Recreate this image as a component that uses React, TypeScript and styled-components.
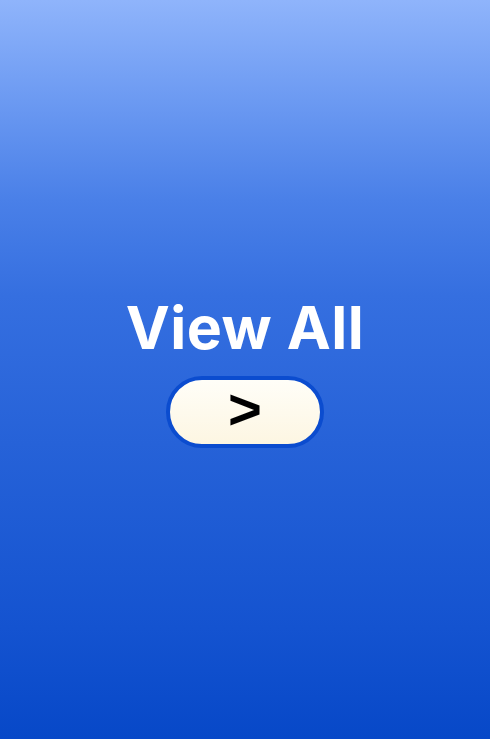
import styled, { createGlobalStyle } from 'styled-components';

const GlobalStyle = createGlobalStyle`
	html, body {
		margin: 0;
		padding: 0;
	}

	body {
		font-family: Inter, "Liberation Sans", sans-serif;
	}
`;

const App = () => {
	return (
		<>
			<GlobalStyle />
			<Page>
				<Title>View All</Title>
				<ArrowButton type="button" aria-label="View all">
					&gt;
				</ArrowButton>
			</Page>
		</>
	);
};

export default App;

const Page = styled.main`
	display: flex;
	flex-direction: column;
	align-items: center;
	justify-content: center;
	width: 100%;
	height: 739px;
	padding-top: 6px;
	box-sizing: border-box;
	background: linear-gradient(
		180deg,
		#8fb4fb 0%,
		#6c9af2 13.5%,
		#4a80e8 27%,
		#356fe0 40%,
		#2662d8 60%,
		#1453d0 85%,
		#0748c8 100%
	);
`;

const Title = styled.h1`
	margin: 0;
	font-family: Inter, "Liberation Sans", sans-serif;
	font-size: 59px;
	font-weight: 700;
	line-height: 1;
	letter-spacing: 0.5px;
	color: #ffffff;
`;

const ArrowButton = styled.button`
	display: flex;
	align-items: center;
	justify-content: center;
	margin-top: 19px;
	width: 158px;
	height: 72px;
	padding: 0 0 6px;
	border: 4px solid #0b4ccf;
	border-radius: 36px;
	background: linear-gradient(180deg, #fffef8 0%, #fdf6e2 100%);
	font-family: "Liberation Sans", Arial, sans-serif;
	font-size: 58px;
	font-weight: 700;
	line-height: 1;
	color: #000000;
	box-sizing: border-box;
	cursor: pointer;
`;
